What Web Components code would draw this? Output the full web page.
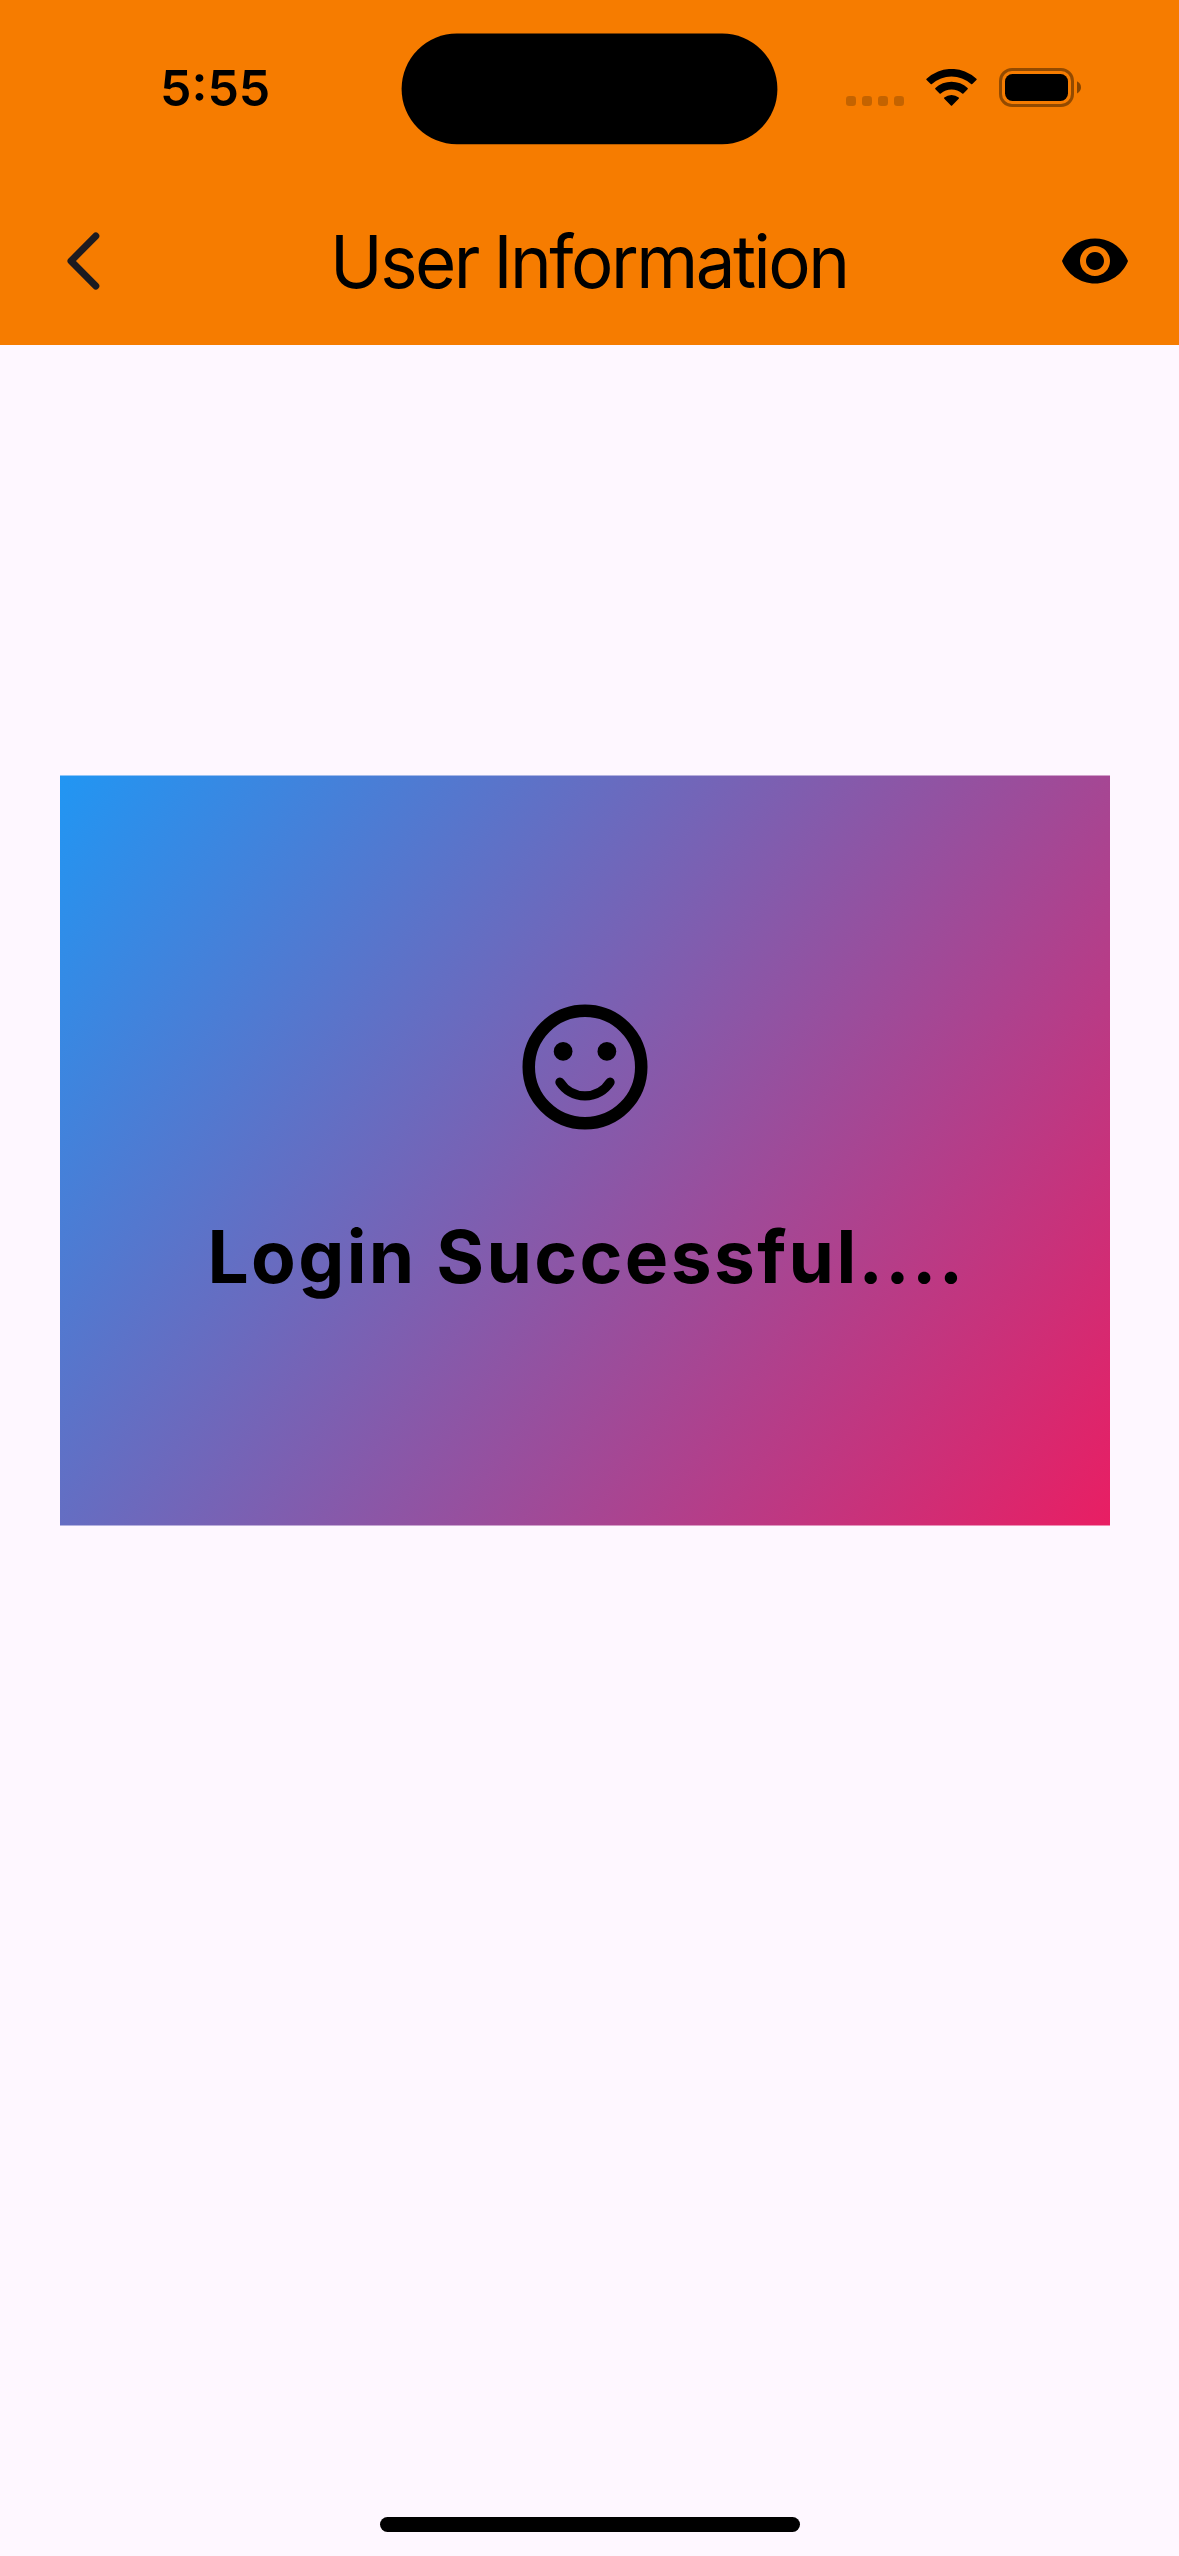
<!DOCTYPE html>
<html lang="en">
<head>
<meta charset="utf-8">
<title>User Information</title>
<style>
html, body { margin: 0; padding: 0; }
body { width: 1179px; height: 2556px; overflow: hidden; background: #fef7ff; font-family: Inter, "Liberation Sans", sans-serif; color: #000; }
</style>
</head>
<body>
<app-screen>
  <status-bar slot="top" time="5:55"></status-bar>
  <nav-bar slot="top">User Information</nav-bar>
  <message-card>Login Successful....</message-card>
</app-screen>
<script>
const define = (name, html, setup) => customElements.define(name, class extends HTMLElement {
  constructor() {
    super();
    this.attachShadow({ mode: 'open' }).innerHTML = html;
  }
  connectedCallback() { if (setup) setup(this, this.shadowRoot); }
});

define('app-screen', `
<style>
:host { display: flex; flex-direction: column; width: 1179px; height: 2556px; background: #fef7ff; }
header { background: #f67c00; height: 345px; display: flex; flex-direction: column; }
main { flex: 1; padding: 430px 69px 0 60px; }
footer { height: 15px; padding-bottom: 24px; display: flex; justify-content: center; }
i { width: 420px; height: 15px; border-radius: 7.5px; background: #000; margin-left: 1px; }
</style>
<header><slot name="top"></slot></header>
<main><slot></slot></main>
<footer><i></i></footer>`);

define('status-icons', `
<style>
:host { display: flex; align-items: flex-start; height: 39px; }
svg { display: block; }
.dots { margin-top: 28px; }
.wifi { margin: 1px 0 0 22px; }
.batt { margin-left: 22px; }
</style>
<svg class="dots" width="58" height="10" fill="#000" fill-opacity=".2">
  <rect width="10" height="10" rx="3.2"/><rect x="16" width="10" height="10" rx="3.2"/><rect x="32" width="10" height="10" rx="3.2"/><rect x="48" width="10" height="10" rx="3.2"/>
</svg>
<svg class="wifi" width="51" height="37" viewBox="0 0 51 37">
  <path d="M.6 9.8A36.3 36.3 0 0 1 50.4 9.8Q51 10.4 50.4 11L46.3 15Q45.7 15.6 45.1 15A29.5 29.5 0 0 0 5.9 15Q5.3 15.6 4.7 15L.6 11Q0 10.4.6 9.8Z"/>
  <path d="M9.4 19A23.6 23.6 0 0 1 41.6 19Q42.2 19.6 41.6 20.2L37.4 24.4Q36.8 25 36.2 24.4A16.5 16.5 0 0 0 14.8 24.4Q14.2 25 13.6 24.4L9.4 20.2Q8.8 19.6 9.4 19Z"/>
  <path d="M18.3 28.5A11.2 11.2 0 0 1 32.7 28.5Q33.4 29.1 32.7 29.8L26.1 36.4Q25.5 37 24.9 36.4L18.3 29.8Q17.6 29.1 18.3 28.5Z"/>
</svg>
<svg class="batt" width="82" height="39" viewBox="0 0 82 39">
  <rect x="1.5" y="1.5" width="72" height="36" rx="11.5" fill="none" stroke="#000" stroke-opacity=".4" stroke-width="3"/>
  <rect x="6" y="6" width="63" height="27" rx="7.5"/>
  <path d="M78 13.2Q82 15.2 82 19.3T78 25.4Z" fill-opacity=".45"/>
</svg>`);

define('status-bar', `
<style>
:host { display: flex; height: 177px; align-items: flex-start; }
time { margin: 58px 0 0 160px; width: 241px; font-size: 50px; line-height: 60px; font-weight: 600; }
svg { display: block; margin-top: 33px; }
status-icons { margin: 68px 0 0 68px; }
</style>
<time></time>
<svg width="377" height="112"><rect x=".6" y=".6" width="375.8" height="110.6" rx="55.3"/></svg>
<status-icons></status-icons>`, (el, root) => {
  root.querySelector('time').textContent = el.getAttribute('time');
});

define('nav-bar', `
<style>
:host { display: flex; height: 168px; align-items: center; justify-content: space-between; padding: 0 48px; }
svg { display: block; width: 72px; height: 72px; }
h1 { margin: 2px 1px 0 0; font-size: 73px; line-height: 90px; font-weight: 400; letter-spacing: -2.58px; word-spacing: -2px; white-space: nowrap; transform: scaleX(.97); }
</style>
<svg viewBox="0 0 72 72"><path d="M47.8 11L23 36L47.8 61" fill="none" stroke="#1d1b20" stroke-width="7" stroke-linecap="round" stroke-linejoin="round"/></svg>
<h1><slot></slot></h1>
<svg viewBox="0 0 24 24"><path d="M12 4.5C7 4.5 2.73 7.61 1 12c1.73 4.39 6 7.5 11 7.5s9.27-3.11 11-7.5c-1.73-4.39-6-7.5-11-7.5zM12 17c-2.76 0-5-2.24-5-5s2.24-5 5-5 5 2.24 5 5-2.24 5-5 5zm0-8c-1.66 0-3 1.34-3 3s1.34 3 3 3 3-1.34 3-3-1.34-3-3-3z"/></svg>`);

define('message-card', `
<style>
:host { display: flex; flex-direction: column; align-items: center; gap: 71px; box-sizing: border-box; width: 1050px; height: 751px; padding-top: 217px;
  background: linear-gradient(125.54deg, #2196f3, #e91e63);
  -webkit-mask: linear-gradient(rgba(0,0,0,.5) 1px, #000 1px, #000 750px, rgba(0,0,0,.5) 750px);
  mask: linear-gradient(rgba(0,0,0,.5) 1px, #000 1px, #000 750px, rgba(0,0,0,.5) 750px); }
svg { display: block; flex: none; }
p { margin: 0; padding-left: 3px; font-size: 73px; line-height: 88px; font-weight: 700; letter-spacing: 2.36px; white-space: nowrap; }
</style>
<svg width="150" height="150" viewBox="0 0 24 24">
  <circle cx="12" cy="12" r="9" fill="none" stroke="#000" stroke-width="2"/>
  <circle cx="8.5" cy="9.5" r="1.5"/><circle cx="15.5" cy="9.5" r="1.5"/>
  <path d="M8 14.45A4.76 4.76 0 0 0 16 14.45" fill="none" stroke="#000" stroke-width="1.5" stroke-linecap="round"/>
</svg>
<p><slot></slot></p>`);
</script>
</body>
</html>
